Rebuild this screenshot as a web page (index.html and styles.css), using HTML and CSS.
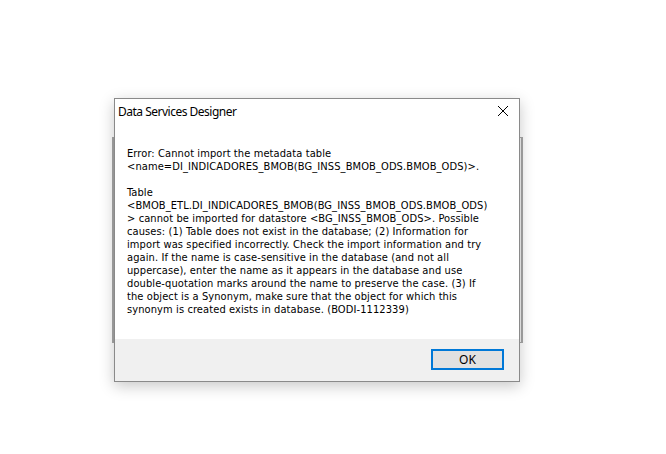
FILE: index.html
```html
<!DOCTYPE html>
<html>
<head>
<meta charset="utf-8">
<link rel="stylesheet" href="styles.css">
</head>
<body>
<div class="desktop">
  <div class="behind"></div>
  <div class="dialog">
    <div class="titlebar">
      <span class="title">Data Services Designer</span>
      <svg class="close" width="12" height="12" viewBox="0 0 12 12"><path d="M1 1 L11 11 M11 1 L1 11" stroke="#000" stroke-width="1" fill="none"/></svg>
    </div>
    <div class="body">
      <p class="msg">Error: Cannot import the metadata table<br>&lt;name=DI_INDICADORES_BMOB(BG_INSS_BMOB_ODS.BMOB_ODS)&gt;.</p>
      <p class="msg">Table<br>&lt;BMOB_ETL.DI_INDICADORES_BMOB(BG_INSS_BMOB_ODS.BMOB_ODS)<br>&gt; cannot be imported for datastore &lt;BG_INSS_BMOB_ODS&gt;. Possible<br>causes: (1) Table does not exist in the database; (2) Information for<br>import was specified incorrectly. Check the import information and try<br>again. If the name is case-sensitive in the database (and not all<br>uppercase), enter the name as it appears in the database and use<br>double-quotation marks around the name to preserve the case. (3) If<br>the object is a Synonym, make sure that the object for which this<br>synonym is created exists in database. (BODI-1112339)</p>
    </div>
    <div class="footer">
      <button class="ok">OK</button>
    </div>
  </div>
</div>
</body>
</html>
```
FILE: styles.css
```css
html, body {
  margin: 0;
  padding: 0;
  background: #ffffff;
}
.desktop {
  position: relative;
  width: 666px;
  height: 454px;
  overflow: hidden;
  font-family: "Noto Sans", "Open Sans", sans-serif;
  font-size: 12px;
  color: #000;
}
.behind {
  position: absolute;
  left: 112px;
  top: 137px;
  width: 407px;
  height: 204px;
  border: 1px solid #a8a8a8;
  border-left-width: 2px;
  border-right-width: 2px;
  background: #f4f4f4;
}
.dialog {
  position: absolute;
  left: 114px;
  top: 98px;
  width: 404px;
  height: 282px;
  border: 1px solid #8a8a8a;
  background: #fff;
  display: flex;
  flex-direction: column;
  box-shadow: 0 4px 14px rgba(0,0,0,0.22);
}
.titlebar {
  height: 24px;
  display: flex;
  align-items: center;
  justify-content: space-between;
  padding: 0 10px 0 3px;
  flex: none;
}
.title {
  font-size: 12px;
  letter-spacing: -0.5px;
}
.close {
  display: block;
}
.body {
  flex: 1;
  padding: 24px 0 0 12px;
}
.msg {
  margin: 0 0 13px 0;
  font-family: "DejaVu Sans Condensed", "DejaVu Sans", sans-serif;
  font-size: 11px;
  line-height: 13px;
  white-space: nowrap;
  letter-spacing: 0.1px;
}
.footer {
  flex: none;
  height: 42px;
  background: #f0f0f0;
  display: flex;
  justify-content: flex-end;
  align-items: flex-start;
  padding: 10px 15px 0 0;
  box-sizing: border-box;
}
.ok {
  width: 73px;
  height: 21px;
  border: 2px solid #0078d7;
  background: #e1e1e1;
  font-family: "Noto Sans", "Open Sans", sans-serif;
  font-size: 12px;
  color: #000;
  padding: 0;
  line-height: 15px;
}
```
